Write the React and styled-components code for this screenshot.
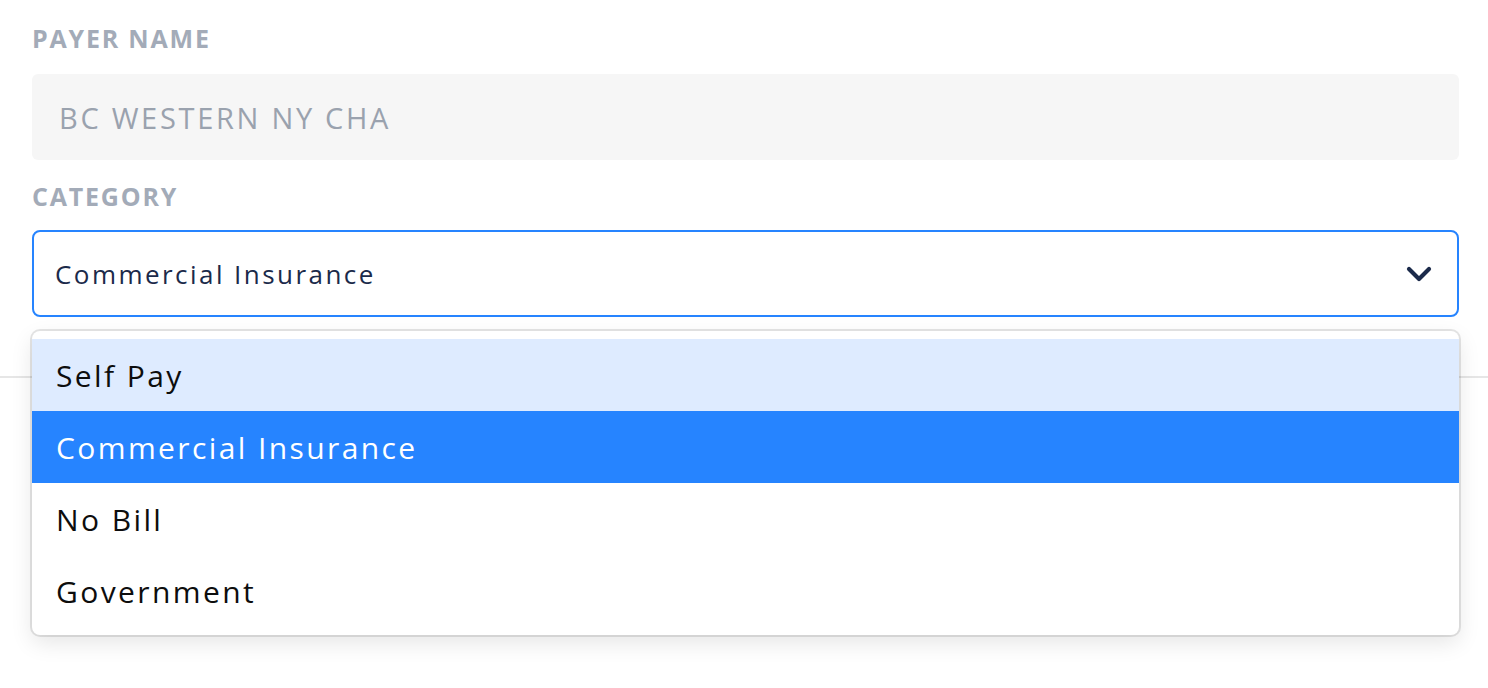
import React from "react";
import styled, { createGlobalStyle } from "styled-components";

const Global = createGlobalStyle`
  html, body { margin: 0; padding: 0; background: #ffffff; }
  body { font-family: "Open Sans", "Liberation Sans", sans-serif; }
  * { box-sizing: border-box; }
`;

const Page = styled.div`
  width: 1488px;
  height: 688px;
  overflow: hidden;
  background: #fff;
`;

const Form = styled.div`
  padding: 22px 29px 59px 32px;
  display: flex;
  flex-direction: column;
`;

const Label = styled.div`
  font-size: 25px;
  line-height: 32px;
  font-weight: 700;
  letter-spacing: 1.8px;
  color: #a3abb8;
  text-transform: uppercase;
  margin-bottom: ${(p) => p.$mb || 20}px;
`;

const ReadOnlyInput = styled.div`
  height: 86px;
  border-radius: 6px;
  background: #f6f6f6;
  padding-left: 27px;
  display: flex;
  align-items: center;
  font-size: 29px;
  letter-spacing: 2.7px;
  color: #9aa2ae;
  margin-bottom: 20px;
`;

const SelectWrap = styled.div`
  position: relative;
`;

const Control = styled.div`
  height: 87px;
  border: 2px solid #2684ff;
  border-radius: 8px;
  background: #fff;
  display: flex;
  align-items: center;
  justify-content: space-between;
  padding: 0 25px 0 21px;
  font-size: 26px;
  letter-spacing: 2.45px;
  color: #1b2a4a;
`;

const Menu = styled.div`
  position: absolute;
  top: 101px;
  left: 0;
  right: 0;
  background: #fff;
  border-radius: 8px;
  padding: 8px 0;
  box-shadow: 0 0 0 2px rgba(0, 0, 0, 0.1), 0 8px 22px rgba(0, 0, 0, 0.1);
  z-index: 2;
`;

const Option = styled.div`
  height: 72px;
  display: flex;
  align-items: center;
  padding: 0 24px;
  font-size: 30px;
  letter-spacing: 2.4px;
  color: ${(p) => (p.$selected ? "#ffffff" : "#0d0d0d")};
  background: ${(p) =>
    p.$selected ? "#2684ff" : p.$focused ? "#deebff" : "transparent"};
`;

const Divider = styled.div`
  height: 2px;
  background: #e6e6e6;
`;

const Chevron = () => (
  <svg width="26" height="18" viewBox="0 0 26 18" fill="none">
    <path
      d="M3 4 L13 14 L23 4"
      stroke="#1b2a4a"
      strokeWidth="4.2"
      strokeLinecap="round"
      strokeLinejoin="round"
    />
  </svg>
);

const options = ["Self Pay", "Commercial Insurance", "No Bill", "Government"];

export default function App() {
  return (
    <Page>
      <Global />
      <Form>
        <Label $mb={20}>Payer Name</Label>
        <ReadOnlyInput>BC WESTERN NY CHA</ReadOnlyInput>
        <Label $mb={18}>Category</Label>
        <SelectWrap>
          <Control>
            <span>Commercial Insurance</span>
            <Chevron />
          </Control>
          <Menu>
            {options.map((o, i) => (
              <Option key={o} $focused={i === 0} $selected={i === 1}>
                {o}
              </Option>
            ))}
          </Menu>
        </SelectWrap>
      </Form>
      <Divider />
    </Page>
  );
}
